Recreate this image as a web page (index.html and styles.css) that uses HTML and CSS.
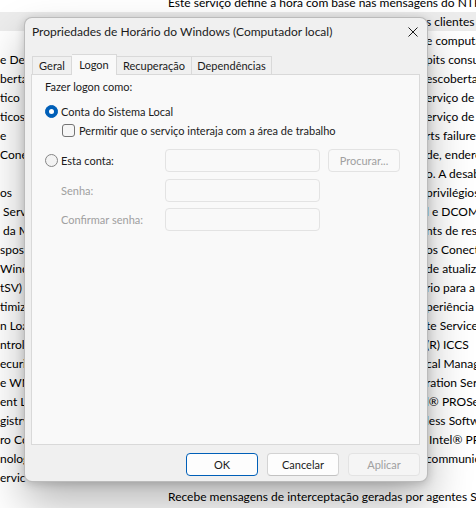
FILE: index.html
```html
<!DOCTYPE html>
<html lang="pt-BR">
<head>
<meta charset="utf-8">
<title>Propriedades de Horário do Windows</title>
<link rel="stylesheet" href="styles.css">
</head>
<body>
<div class="services">
  <div class="row"><span class="name"></span><span class="desc">Este serviço define a hora com base nas mensagens do NTP</span></div>
  <div class="row selected"><span class="name"></span><span class="desc"><span class="tail">s clientes</span></span></div>
  <div class="row"><span class="name"></span><span class="desc"><span class="tail">e computador</span></span></div>
  <div class="row"><span class="name">e Des</span><span class="desc"><span class="tail">pits consumidos</span></span></div>
  <div class="row"><span class="name">berta</span><span class="desc"><span class="tail">escoberta</span></span></div>
  <div class="row"><span class="name">tico</span><span class="desc"><span class="tail">erviço de</span></span></div>
  <div class="row"><span class="name">ticos</span><span class="desc"><span class="tail">erviço de</span></span></div>
  <div class="row"><span class="name">e</span><span class="desc"><span class="tail">rts failure</span></span></div>
  <div class="row"><span class="name">Cone</span><span class="desc"><span class="tail">de, endereço</span></span></div>
  <div class="row"><span class="name"></span><span class="desc"><span class="tail">o. A desabilitação</span></span></div>
  <div class="row"><span class="name">os</span><span class="desc"><span class="tail">privilégios</span></span></div>
  <div class="row"><span class="name"> Serv</span><span class="desc"><span class="tail">l e DCOM</span></span></div>
  <div class="row"><span class="name"> da M</span><span class="desc"><span class="tail">nts de resposta</span></span></div>
  <div class="row"><span class="name">spos</span><span class="desc"><span class="tail">os Conectados</span></span></div>
  <div class="row"><span class="name">Windo</span><span class="desc"><span class="tail">de atualização</span></span></div>
  <div class="row"><span class="name">tSV)</span><span class="desc"><span class="tail">rio para a</span></span></div>
  <div class="row"><span class="name">timiz</span><span class="desc"><span class="tail">periência</span></span></div>
  <div class="row"><span class="name">n Loa</span><span class="desc"><span class="tail">te Service</span></span></div>
  <div class="row"><span class="name">ntrol</span><span class="desc"><span class="tail">(R) ICCS</span></span></div>
  <div class="row"><span class="name">ecurit</span><span class="desc"><span class="tail">cal Manager</span></span></div>
  <div class="row"><span class="name">e WM</span><span class="desc"><span class="tail">ration Service</span></span></div>
  <div class="row"><span class="name">ent L</span><span class="desc"><span class="tail">l® PROSet</span></span></div>
  <div class="row"><span class="name">gistry</span><span class="desc"><span class="tail">less Software</span></span></div>
  <div class="row"><span class="name">ro Co</span><span class="desc"><span class="tail"> Intel® PROSet</span></span></div>
  <div class="row"><span class="name">nolog</span><span class="desc"><span class="tail">communication</span></span></div>
  <div class="row"><span class="name">ervic</span><span class="desc"></span></div>
  <div class="row"><span class="name"></span><span class="desc">Recebe mensagens de interceptação geradas por agentes SNMP</span></div>
</div>

<div class="dialog">
  <div class="titlebar">
    <span class="title">Propriedades de Horário do Windows (Computador local)</span>
    <span class="close"><svg width="10" height="10" viewBox="0 0 10 10"><path d="M0.5 0.5L9.5 9.5M9.5 0.5L0.5 9.5" stroke="#1b1b1b" stroke-width="1" fill="none"/></svg></span>
  </div>
  <div class="tabs">
    <div class="tab tab-geral">Geral</div>
    <div class="tab tab-logon active">Logon</div>
    <div class="tab tab-rec">Recuperação</div>
    <div class="tab tab-dep">Dependências</div>
  </div>
  <div class="panel">
    <div class="heading">Fazer logon como:</div>
    <div class="option first"><span class="radio checked"></span><span>Conta do Sistema Local</span></div>
    <div class="option sub"><span class="checkbox"></span><span>Permitir que o serviço interaja com a área de trabalho</span></div>
    <div class="account">
      <div class="option"><span class="radio"></span><span>Esta conta:</span></div>
      <div class="field"></div>
      <div class="btn disabled">Procurar...</div>
      <div class="label">Senha:</div>
      <div class="field"></div>
      <div></div>
      <div class="label">Confirmar senha:</div>
      <div class="field"></div>
    </div>
  </div>
  <div class="buttons">
    <div class="btn default">OK</div>
    <div class="btn">Cancelar</div>
    <div class="btn disabled">Aplicar</div>
  </div>
</div>
</body>
</html>
```

FILE: styles.css
```css
* { box-sizing: border-box; }
html, body { margin: 0; padding: 0; }
body {
  width: 476px;
  height: 508px;
  overflow: hidden;
  position: relative;
  background: #ffffff;
  font-family: Lato, "Liberation Sans", sans-serif;
  font-size: 12px;
  color: #000;
}

/* background services list */
.services { margin-top: -7px; }
.row {
  display: grid;
  grid-template-columns: 168px 1fr;
  height: 19px;
  line-height: 19px;
  white-space: pre;
}
.row .name, .row .desc { overflow: hidden; }
.row.selected { background: #ececec; }
.tail { padding-left: 258px; }

/* dialog */
.dialog {
  position: absolute;
  left: 24px;
  top: 17px;
  width: 404px;
  height: 465px;
  display: flex;
  flex-direction: column;
  background: #f0f0f0;
  border: 1px solid rgba(0, 0, 0, 0.22);
  border-radius: 8px;
  box-shadow: 0 22px 44px rgba(0, 0, 0, 0.28), 0 2px 10px rgba(0, 0, 0, 0.18);
  color: #1b1b1b;
  font-size: 11px;
}
.titlebar {
  height: 28px;
  display: flex;
  align-items: center;
  justify-content: space-between;
  padding: 0 9px 0 7px;
}
.title { line-height: 28px; font-size: 12px; }
.close { display: flex; width: 10px; height: 10px; }

.tabs {
  margin-top: 8px;
  height: 20px;
  display: flex;
  align-items: flex-end;
  padding-left: 7px;
  position: relative;
  z-index: 1;
}
.tab {
  height: 18px;
  line-height: 17px;
  text-align: center;
  background: #f0f0f0;
  border-top: 1px solid #d9d9d9;
  border-right: 1px solid #d9d9d9;
}
.tab:first-child { border-left: 1px solid #d9d9d9; }
.tab.active {
  height: 21px;
  line-height: 20px;
  margin-bottom: -1px;
  background: #f9f9f9;
}
.tab-geral { width: 40px; }
.tab-logon { width: 45px; }
.tab-rec { width: 75px; }
.tab-dep { width: 80px; }

.panel {
  margin: 0 7px 0 6px;
  height: 371px;
  background: #f9f9f9;
  border: 1px solid #d9d9d9;
  padding: 4px 0 0 13px;
}
.heading { line-height: 16px; height: 16px; }
.option {
  display: flex;
  align-items: center;
  gap: 3px;
  height: 16px;
}
.option.first { margin-top: 8px; }
.option.sub { margin-top: 3px; padding-left: 17px; }
.option.sub .checkbox { margin-right: 1px; }

.radio {
  position: relative;
  width: 13px;
  height: 13px;
  border-radius: 50%;
  border: 1px solid #858585;
  background: #f3f3f3;
  flex: none;
}
.radio.checked { background: #005fb8; border-color: #005fb8; }
.radio.checked::after {
  content: "";
  position: absolute;
  left: 3px;
  top: 3px;
  width: 5px;
  height: 5px;
  border-radius: 50%;
  background: #fff;
}
.checkbox {
  width: 13px;
  height: 13px;
  border: 1px solid #747474;
  border-radius: 3px;
  background: #f6f6f6;
  flex: none;
}

.account {
  margin-top: 11px;
  display: grid;
  grid-template-columns: 112px 155px 72px;
  grid-auto-rows: 23px;
  column-gap: 8px;
  row-gap: 6.5px;
  align-items: center;
}
.account .option { height: 23px; }
.label { padding-left: 16px; color: #a0a0a0; }
.field {
  height: 23px;
  border: 1px solid #e3e3e3;
  border-radius: 4px;
  background: #f9f9f9;
}

.btn {
  width: 72px;
  height: 23px;
  line-height: 21px;
  text-align: center;
  border: 1px solid #d3d3d3;
  border-bottom-color: #c2c2c2;
  border-radius: 4px;
  background: #fdfdfd;
  color: #1b1b1b;
}
.btn.default { border-color: #005fb8; }
.btn.disabled {
  background: #f5f5f5;
  border-color: #e3e3e3;
  color: #a0a0a0;
}
.account .btn.disabled { background: #f9f9f9; }

.buttons {
  margin-top: 8px;
  display: flex;
  justify-content: flex-end;
  gap: 9px;
  padding-right: 7px;
}
```
